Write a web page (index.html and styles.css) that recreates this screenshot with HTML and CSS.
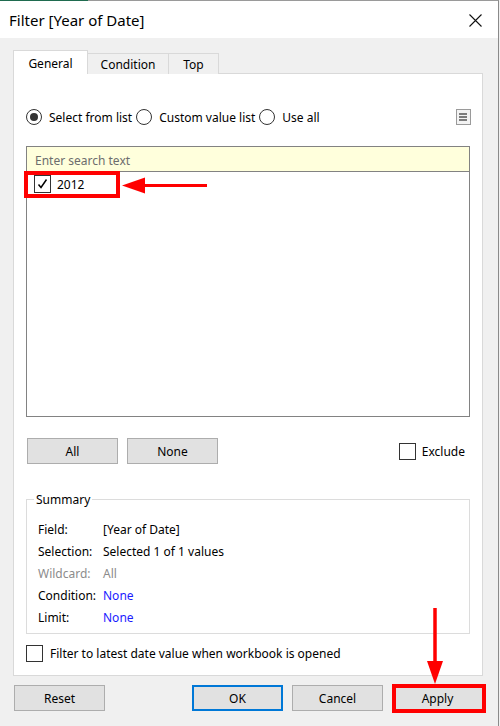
FILE: index.html
```html
<!DOCTYPE html>
<html lang="en">
<head>
  <meta charset="UTF-8">
  <title>Filter [Year of Date]</title>
  <link rel="stylesheet" href="styles.css">
</head>
<body>

  <div class="window">
    <div class="titlebar">
      <span class="title">Filter [Year of Date]</span>
      <svg class="close" width="13" height="13" viewBox="0 0 13 13">
        <path d="M0.5 0.5 L12.5 12.5 M12.5 0.5 L0.5 12.5" stroke="#111" stroke-width="1.1" fill="none"/>
      </svg>
    </div>

    <div class="dialog">
      <div class="tabs">
        <div class="tab active">General</div>
        <div class="tab">Condition</div>
        <div class="tab">Top</div>
      </div>

      <div class="panel">
        <div class="mode-row">
          <label class="radio"><span class="circle on"></span>Select from list</label>
          <label class="radio"><span class="circle"></span>Custom value list</label>
          <label class="radio"><span class="circle"></span>Use all</label>
          <span class="menu-btn">
            <svg width="9" height="8" viewBox="0 0 9 8">
              <path d="M0 1 H8 M0 4 H8 M0 7 H8" stroke="#555" stroke-width="1.6"/>
            </svg>
          </span>
        </div>

        <div class="listbox">
          <div class="search">Enter search text</div>
          <div class="item">
            <span class="box checked">
              <svg width="15" height="16" viewBox="0 0 15 16">
                <path d="M3.5 8.5 L6 11.5 L11.5 3.5" stroke="#000" stroke-width="1.5" fill="none"/>
              </svg>
            </span>
            2012
          </div>
        </div>

        <div class="button-row">
          <button class="btn">All</button>
          <button class="btn">None</button>
          <label class="check-label exclude"><span class="box"></span>Exclude</label>
        </div>

        <fieldset class="summary">
          <legend>Summary</legend>
          <div class="summary-row"><span class="key">Field:</span><span>[Year of Date]</span></div>
          <div class="summary-row"><span class="key">Selection:</span><span>Selected 1 of 1 values</span></div>
          <div class="summary-row muted"><span class="key">Wildcard:</span><span>All</span></div>
          <div class="summary-row"><span class="key">Condition:</span><span class="link">None</span></div>
          <div class="summary-row"><span class="key">Limit:</span><span class="link">None</span></div>
        </fieldset>

        <label class="check-label latest"><span class="box"></span>Filter to latest date value when workbook is opened</label>
      </div>

      <div class="footer">
        <button class="btn">Reset</button>
        <span class="spacer"></span>
        <button class="btn default">OK</button>
        <button class="btn">Cancel</button>
        <button class="btn">Apply</button>
      </div>
    </div>

    <!-- red callouts drawn on top of the screenshot -->
    <svg class="annotations" width="500" height="726" viewBox="0 0 500 726">
      <rect x="26" y="173" width="92" height="23" fill="none" stroke="#ff0000" stroke-width="4"/>
      <line x1="143" y1="185.5" x2="207" y2="185.5" stroke="#ff0000" stroke-width="3"/>
      <polygon points="122,185.5 145,177.5 145,193.5" fill="#ff0000"/>
      <rect x="394" y="686" width="90" height="25" fill="none" stroke="#ff0000" stroke-width="4"/>
      <line x1="435" y1="608" x2="435" y2="664" stroke="#ff0000" stroke-width="3.5"/>
      <polygon points="427,661 443,661 435,684" fill="#ff0000"/>
    </svg>
  </div>

</body>
</html>
```

FILE: styles.css
```css
body {
  margin: 0;
  font-family: "Noto Sans", "Open Sans", sans-serif;
  font-size: 12px;
  color: #000;
  background-color: #f0f0f0;
}
.window {
  position: relative;
  width: 498px;
  height: 725px;
  border-top: 1px solid #9a9a9a;
  border-right: 1px solid #8a8a8a;
  background-color: #f0f0f0;
}
.window::before {
  content: "";
  position: absolute;
  left: 0;
  top: -1px;
  width: 88px;
  height: 1px;
  background-color: #1f6b4f;
}
.titlebar {
  height: 37px;
  background: #fff;
  display: flex;
  align-items: center;
  justify-content: space-between;
  padding: 0 16px 0 9px;
}
.title {
  font-size: 15px;
  margin-top: 1px;
}
.close {
  margin-top: 2px;
}
.dialog {
  padding: 13px 15px 0 13px;
}
.tabs {
  display: flex;
  align-items: flex-end;
  height: 23px;
  margin-bottom: -1px;
  position: relative;
  z-index: 1;
}
.tab {
  height: 21px;
  box-sizing: border-box;
  border: 1px solid #d9d9d9;
  border-bottom: none;
  border-left: none;
  background: #f0f0f0;
  display: flex;
  align-items: center;
  justify-content: center;
  padding-top: 1px;
}
.tab:nth-child(2) { width: 81px; }
.tab:nth-child(3) { width: 50px; }
.tab.active {
  width: 75px;
  height: 24px;
  background: #fff;
  border-left: 1px solid #d9d9d9;
  padding-top: 2px;
  padding-bottom: 0;
}
.panel {
  background: #fff;
  border: 1px solid #d9d9d9;
  height: 603px;
  box-sizing: border-box;
  padding: 35px 12px 0 12px;
}
.mode-row {
  display: flex;
  align-items: center;
  height: 16px;
}
.radio {
  display: flex;
  align-items: center;
  margin-right: 4px;
}
.circle {
  width: 14px;
  height: 14px;
  border: 1px solid #333;
  border-radius: 50%;
  margin-right: 7px;
  position: relative;
}
.circle.on::after {
  content: "";
  position: absolute;
  left: 3px;
  top: 3px;
  width: 8px;
  height: 8px;
  border-radius: 50%;
  background: #333;
}
.menu-btn {
  margin-left: auto;
  width: 13px;
  height: 14px;
  border: 1px solid #9a9a9a;
  background: #f3f3f3;
  display: flex;
  align-items: center;
  justify-content: center;
  margin-right: -1px;
}
.listbox {
  margin-top: 21px;
  height: 271px;
  box-sizing: border-box;
  border: 1px solid #828282;
}
.search {
  height: 25px;
  box-sizing: border-box;
  border-bottom: 1px solid #828282;
  background: #ffffdc;
  color: #6d6d6d;
  padding-left: 8px;
  line-height: 27px;
}
.item {
  display: flex;
  align-items: center;
  height: 22px;
  padding-left: 7px;
  margin-top: 1px;
}
.box {
  width: 15px;
  height: 15px;
  border: 1px solid #333;
  background: #fff;
  margin-right: 6px;
  display: inline-flex;
}
.box.checked {
  height: 16px;
}
.button-row {
  display: flex;
  align-items: center;
  margin-top: 21px;
  height: 26px;
}
.btn {
  font-family: inherit;
  font-size: 12px;
  color: #000;
  width: 91px;
  height: 26px;
  background: #e1e1e1;
  border: 1px solid #adadad;
  padding: 0;
  margin: 0 9px 0 0;
}
.button-row .btn:first-child {
  margin-left: 1px;
}
.check-label {
  display: flex;
  align-items: center;
}
.exclude {
  margin-left: auto;
  margin-right: 5px;
}
.summary {
  margin: 27px 0 0 0;
  padding: 10px 11px 5px 11px;
  border: 1px solid #dcdcdc;
}
.summary legend {
  padding: 0 2px;
  margin-left: -4px;
}
.summary-row {
  display: flex;
  height: 22px;
  line-height: 23px;
}
.key {
  width: 65px;
}
.muted {
  color: #8c8c8c;
}
.link {
  color: #1a1aff;
}
.latest {
  margin-top: 11px;
}
.latest .box {
  margin-right: 7px;
}
.footer {
  display: flex;
  margin-top: 9px;
  padding-left: 1px;
}
.footer .btn {
  margin-right: 0;
  margin-left: 9px;
}
.footer .btn:first-child {
  margin-left: 0;
}
.spacer {
  flex: 1;
}
.btn.default {
  border: 2px solid #0078d7;
}
.annotations {
  position: absolute;
  left: 0;
  top: -1px;
  pointer-events: none;
}
```
